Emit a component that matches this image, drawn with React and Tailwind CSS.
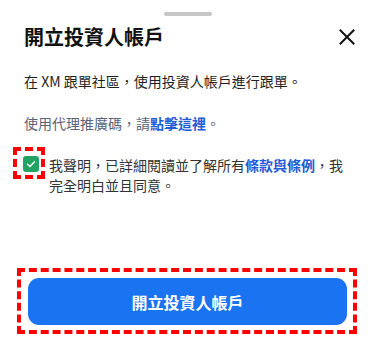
import React from 'react';

function CloseIcon() {
  return (
    <svg width="16" height="16" viewBox="0 0 16 16" fill="none">
      <path
        d="M1.5 1.5L14.5 14.5M14.5 1.5L1.5 14.5"
        stroke="#111111"
        strokeWidth="2"
        strokeLinecap="square"
      />
    </svg>
  );
}

function CheckMark() {
  return (
    <svg width="10" height="10" viewBox="0 0 10 10" fill="none">
      <path
        d="M1.5 5.2L4 7.5L8.5 2.8"
        stroke="#ffffff"
        strokeWidth="1.4"
        strokeLinecap="round"
        strokeLinejoin="round"
      />
    </svg>
  );
}

export default function App() {
  return (
    <div
      className="relative w-[375px] h-[359px] bg-white overflow-hidden"
      style={{ fontFamily: '"Noto Sans CJK TC", "Noto Sans", sans-serif' }}
    >
      {/* drag handle */}
      <div className="flex justify-center pt-3">
        <div className="w-12 h-1 rounded-full bg-[#c6c6c6]" />
      </div>

      {/* header */}
      <div className="flex items-center justify-between pl-6 pr-[20px] mt-[7px] h-[28px]">
        <h2 className="text-[20px] leading-[28px] font-bold text-[#111111]">
          開立投資人帳戶
        </h2>
        <button className="w-4 h-4 flex items-center justify-center">
          <CloseIcon />
        </button>
      </div>

      {/* body */}
      <div className="px-6">
        <p className="mt-[20px] text-[14px] leading-[20px] text-[#1f1f1f]">
          在 XM 跟單社區，使用投資人帳戶進行跟單。
        </p>
        <p className="mt-[22px] text-[14px] leading-[20px] text-[#5a6478]">
          使用代理推廣碼，請
          <span className="font-bold text-[#1f5bd6]">點擊這裡</span>。
        </p>

        <div className="relative flex items-start gap-[10px] mt-[22px] -ml-px">
          <div className="mt-[1px] shrink-0 w-4 h-4 rounded-[3px] bg-[#1fa463] flex items-center justify-center">
            <CheckMark />
          </div>
          <p className="text-[14px] leading-[20px] text-[#333333]">
            我聲明，已詳細閱讀並了解所有
            <span className="font-bold text-[#1f5bd6]">條款與條例</span>
            ，我完全明白並且同意。
          </p>
          {/* annotation */}
          <div className="absolute left-[-10px] top-[-8px] w-8 h-8 border-4 border-dashed border-[#ff0000]" />
        </div>
      </div>

      {/* footer button */}
      <div className="relative px-7 mt-[83px]">
        <button className="w-full h-[47px] rounded-[11px] bg-[#1a73f0] text-white text-[16px] font-bold">
          開立投資人帳戶
        </button>
        <div className="absolute left-[17px] right-[18px] top-[-10px] bottom-[-9px] border-4 border-dashed border-[#ff0000]" />
      </div>
    </div>
  );
}
